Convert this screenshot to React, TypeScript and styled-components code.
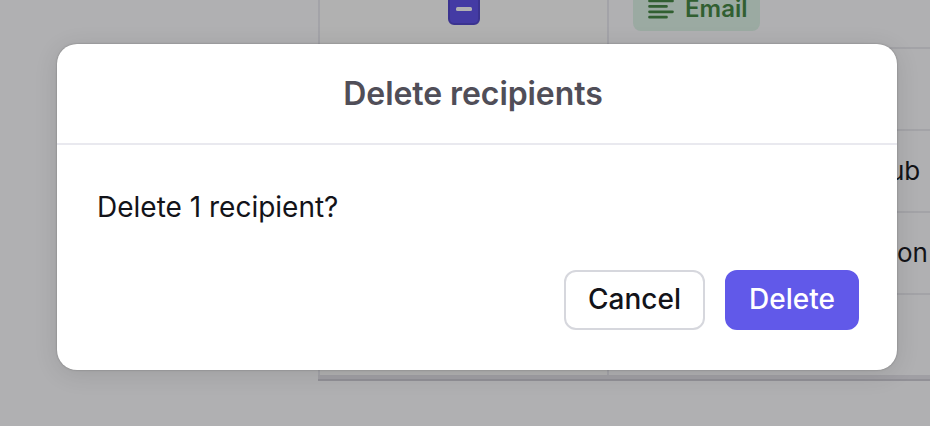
import React from 'react';
import styled, { createGlobalStyle } from 'styled-components';

const GlobalStyle = createGlobalStyle`
  *, *::before, *::after { box-sizing: border-box; }
  body { margin: 0; background: #b0b0b2; font-family: Inter, sans-serif; }
`;

const Page = styled.main`
  position: relative;
  width: 930px;
  height: 426px;
  overflow: hidden;
  background: #b0b0b2;
`;

const Table = styled.div`
  margin-left: 318px;
  width: 612px;
  height: 381px;
  display: flex;
  flex-direction: column;
`;

const Row = styled.div<{ $height: number }>`
  flex: none;
  height: ${(p) => p.$height}px;
  display: grid;
  grid-template-columns: 291px 1fr;
`;

const SelectCell = styled.div`
  display: flex;
  justify-content: center;
  background: #b1b1b1;
  border-left: 2px solid #a3a3a8;
  border-right: 2px solid #a3a3a8;
`;

const DataCell = styled.div<{ $line?: boolean; $inset: number }>`
  display: flex;
  align-items: center;
  padding-left: ${(p) => p.$inset}px;
  border-bottom: ${(p) => (p.$line ? '2px solid #a3a3a7' : '0')};
  font-size: 26px;
  line-height: 32px;
  color: #131317;
  white-space: nowrap;
`;

const Checkbox = styled.div`
  width: 32px;
  height: 32px;
  margin: -7px 0 0 1px;
  display: grid;
  place-items: center;
  border: 2px solid #3b3390;
  border-radius: 6px;
  background: #443ba4;
`;

const Dash = styled.span`
  width: 16px;
  height: 4px;
  border-radius: 1.5px;
  background: #b1b1b1;
`;

const Chip = styled.div`
  align-self: flex-start;
  width: 127px;
  height: 44px;
  margin-top: -13px;
  padding-left: 15px;
  display: flex;
  align-items: center;
  gap: 11px;
  border-radius: 8px;
  background: #9baaa2;
  color: #315f31;
  font-size: 24px;
  font-weight: 600;
`;

const TableFoot = styled.div`
  flex: none;
  height: 6px;
  background: #a09fa4;
  border-bottom: 2px solid #919096;
`;

const Dialog = styled.section`
  position: absolute;
  left: 57px;
  top: 44px;
  width: 840px;
  height: 326px;
  display: flex;
  flex-direction: column;
  border-radius: 20px;
  background: #fff;
  box-shadow: 0 0 2px rgba(0, 0, 0, 0.3), 0 4px 24px rgba(0, 0, 0, 0.11);
`;

const Title = styled.h1`
  height: 101px;
  margin: 0;
  padding: 0 8px 1px 0;
  display: flex;
  align-items: center;
  justify-content: center;
  border-bottom: 2px solid #e9e9ef;
  font-size: 32px;
  font-weight: 600;
  letter-spacing: -0.08px;
  color: #504e58;
`;

const Message = styled.p`
  margin: 44px 40px 0;
  font-size: 28px;
  line-height: 36px;
  color: #131319;
`;

const Actions = styled.footer`
  margin: 45px 38px 0 0;
  display: flex;
  justify-content: flex-end;
  gap: 20px;
`;

const Button = styled.button<{ $primary?: boolean; $width: number }>`
  width: ${(p) => p.$width}px;
  height: 60px;
  padding: 0 0 2px;
  border: 2px solid ${(p) => (p.$primary ? '#6159e9' : '#d6d7dd')};
  border-radius: 12px;
  background: ${(p) => (p.$primary ? '#6159e9' : '#fff')};
  color: ${(p) => (p.$primary ? '#fff' : '#131319')};
  font: 500 28px/36px Inter, sans-serif;
`;

const TextLinesIcon = () => (
  <svg width="26" height="26" viewBox="0 0 26 26" fill="none" stroke="currentColor" strokeWidth="2.7" strokeLinecap="round">
    <path d="M1.5 5H24.5M1.5 10.4H18.5M1.5 15.8H24.5M1.5 21.2H18.5" />
  </svg>
);

const rows = [
  { height: 82, text: '', inset: 24 },
  { height: 82, text: 'ub', inset: 280 },
  { height: 82, text: 'on', inset: 288 },
];

export default function App() {
  return (
    <>
      <GlobalStyle />
      <Page>
        <Table>
          <Row $height={49}>
            <SelectCell>
              <Checkbox><Dash /></Checkbox>
            </SelectCell>
            <DataCell $line $inset={24}>
              <Chip><TextLinesIcon />Email</Chip>
            </DataCell>
          </Row>
          {rows.map((row, i) => (
            <Row key={i} $height={row.height}>
              <SelectCell />
              <DataCell $line $inset={row.inset}>{row.text}</DataCell>
            </Row>
          ))}
          <Row $height={80}>
            <SelectCell />
            <DataCell $inset={24} />
          </Row>
          <TableFoot />
        </Table>
        <Dialog role="dialog" aria-modal="true" aria-labelledby="dialog-title">
          <Title id="dialog-title">Delete recipients</Title>
          <Message>Delete 1 recipient?</Message>
          <Actions>
            <Button $width={141}>Cancel</Button>
            <Button $primary $width={134}>Delete</Button>
          </Actions>
        </Dialog>
      </Page>
    </>
  );
}
